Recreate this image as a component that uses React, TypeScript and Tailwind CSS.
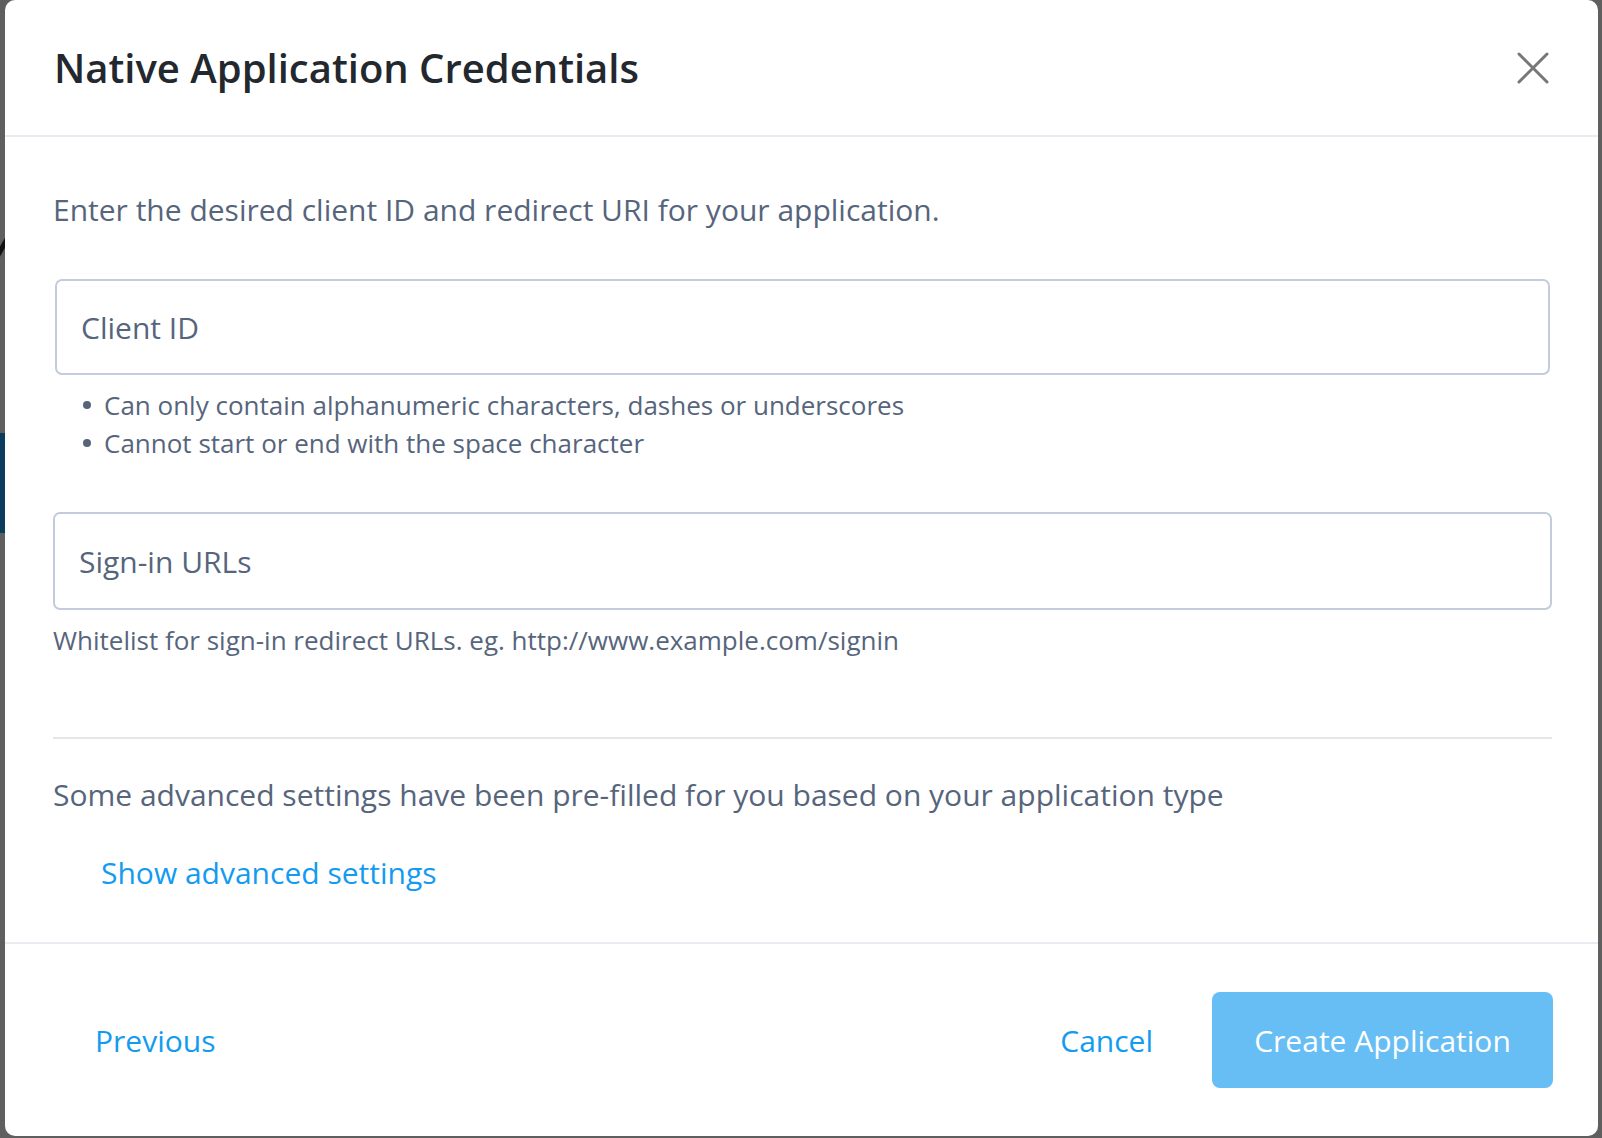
export default function App() {
  return (
    <div className="relative w-[1602px] h-[1138px] overflow-hidden bg-[#5f5f5f] font-['Open_Sans',sans-serif]">
      {/* page behind the overlay, barely visible on the left */}
      <div className="absolute left-0 top-[433px] w-[6px] h-[100px] bg-[#0b3c5d]" />
      <div className="absolute left-0 top-[225px] w-[6px] h-[40px] bg-[linear-gradient(120deg,transparent_40%,#111_45%,#111_60%,transparent_65%)]" />

      <div className="relative ml-[5px] flex h-[1136px] w-[1593px] flex-col rounded-[10px] bg-white">
        {/* header */}
        <div className="flex h-[137px] items-center justify-between border-b-2 border-[#e8ecf0] pl-[49px] pr-[49px]">
          <h1 className="text-[40px] font-semibold leading-[52px] text-[#23282e]">
            Native Application Credentials
          </h1>
          <button className="text-[#777777]">
            <svg width="32" height="32" viewBox="0 0 32 32" fill="none" stroke="currentColor" strokeWidth="3" strokeLinecap="round">
              <path d="M2 2L30 30M30 2L2 30" />
            </svg>
          </button>
        </div>

        {/* body */}
        <div className="flex flex-1 flex-col pl-[48px] pr-[46px] pt-[53px] text-[#56657c]">
          <p className="text-[30px] leading-[40px]">
            Enter the desired client ID and redirect URI for your application.
          </p>

          <div className="mx-[2px] mt-[49px] flex h-[96px] items-center rounded-[7px] border-2 border-[#c3ccda] px-[24px]">
            <span className="text-[30px] text-[#56657c]">Client ID</span>
          </div>

          <ul className="mt-[11px] text-[26px] leading-[38px]">
            <li className="flex items-center">
              <span className="ml-[30px] mr-[13px] h-[8px] w-[8px] rounded-full bg-[#56657c]" />
              Can only contain alphanumeric characters, dashes or underscores
            </li>
            <li className="flex items-center">
              <span className="ml-[30px] mr-[13px] h-[8px] w-[8px] rounded-full bg-[#56657c]" />
              Cannot start or end with the space character
            </li>
          </ul>

          <div className="mt-[50px] flex h-[98px] items-center rounded-[7px] border-2 border-[#c3ccda] px-[24px]">
            <span className="text-[30px] text-[#56657c]">Sign-in URLs</span>
          </div>

          <p className="mt-[11px] text-[26px] leading-[38px]">
            Whitelist for sign-in redirect URLs. eg. http://www.example.com/signin
          </p>

          <div className="mt-[78px] h-[2px] bg-[#e6e6e6]" />

          <p className="mt-[36px] text-[30px] leading-[40px]">
            Some advanced settings have been pre-filled for you based on your application type
          </p>

          <button className="ml-[48px] mt-[38px] self-start text-[30px] leading-[40px] text-[#129bf0]">
            Show advanced settings
          </button>
        </div>

        {/* footer */}
        <div className="flex h-[194px] items-center border-t-2 border-[#e8ecf0] pl-[90px] pr-[45px]">
          <button className="text-[30px] text-[#129bf0]">Previous</button>
          <div className="ml-auto flex items-center gap-[59px]">
            <button className="text-[30px] text-[#129bf0]">Cancel</button>
            <button className="flex h-[96px] w-[341px] items-center justify-center rounded-[8px] bg-[#67bef5] text-[30px] text-white">
              Create Application
            </button>
          </div>
        </div>
      </div>
    </div>
  );
}
